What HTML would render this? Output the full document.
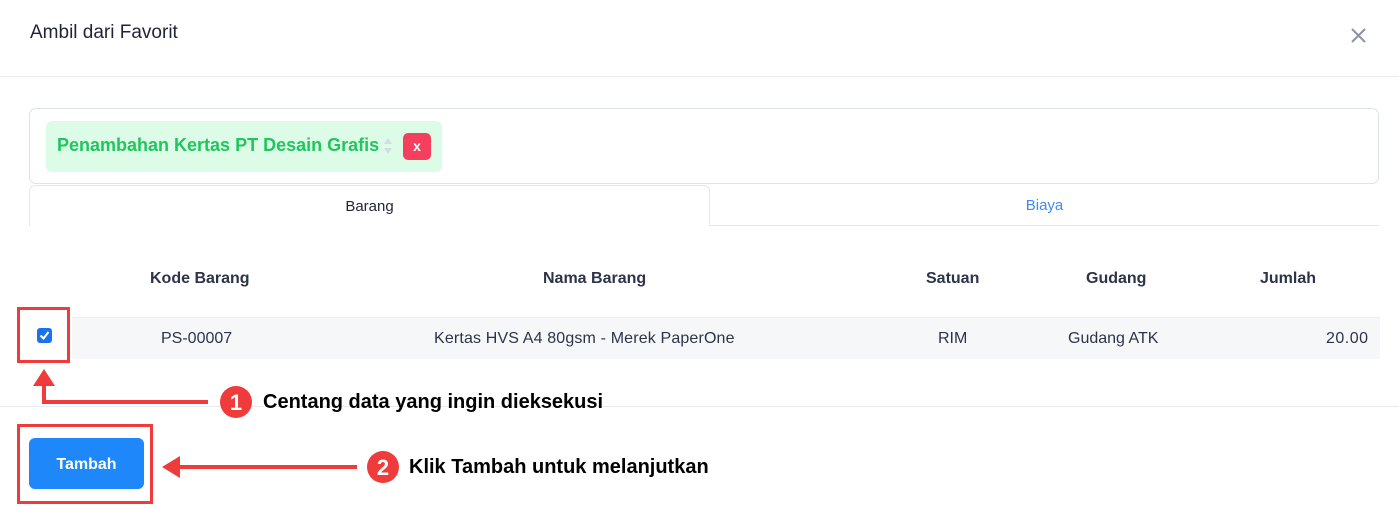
<!DOCTYPE html>
<html><head><style>
body{margin:0;width:1399px;height:514px;background:#fff;font-family:"Liberation Sans",sans-serif;position:relative;overflow:hidden}
.a{position:absolute}
</style></head><body>
<div class="a" style="left:30px;top:22px;font-size:19px;color:#1e2538">Ambil dari Favorit</div>
<svg class="a" style="left:1350px;top:27px" width="17" height="17"><path d="M2 2L15 15M15 2L2 15" stroke="#8a93a3" stroke-width="2"/></svg>
<div class="a" style="left:0;top:76px;width:1399px;height:1px;background:#e9ecf1"></div>
<div class="a" style="left:29px;top:108px;width:1350px;height:76px;border:1px solid #dde1ea;border-radius:7px;box-sizing:border-box"></div>
<div class="a" style="left:46px;top:121px;width:396px;height:51px;background:#dcfce7;border-radius:6px"></div>
<div class="a" style="left:57px;top:135px;font-size:18px;font-weight:bold;color:#22c55e">Penambahan Kertas PT Desain Grafis</div>
<div class="a" style="left:384px;top:138px;width:0;height:0;border:4px solid transparent;border-bottom:6px solid #d6dbe2;border-top:0"></div>
<div class="a" style="left:384px;top:148px;width:0;height:0;border:4px solid transparent;border-top:6px solid #d6dbe2;border-bottom:0"></div>
<div class="a" style="left:403px;top:133px;width:28px;height:27px;background:#f43f5e;border-radius:5px;color:#fff;font-size:14px;font-weight:bold;text-align:center;line-height:27px">x</div>
<div class="a" style="left:29px;top:185px;width:681px;height:41px;border:1px solid #e5e8ee;border-bottom:0;border-radius:6px 6px 0 0;box-sizing:border-box;text-align:center;line-height:42px;font-size:15px;color:#1e2538">Barang</div>
<div class="a" style="left:710px;top:225px;width:669px;height:1px;background:#e5e8ee"></div>
<div class="a" style="left:710px;top:186px;width:669px;text-align:center;line-height:40px;font-size:15px;color:#3b8cf5">Biaya</div>
<div class="a" style="top:270px;left:0;width:1399px;font-size:16px;font-weight:bold;color:#2d3448">
<span class="a" style="left:150px">Kode Barang</span><span class="a" style="left:543px">Nama Barang</span><span class="a" style="left:926px">Satuan</span><span class="a" style="left:1086px">Gudang</span><span class="a" style="left:1260px">Jumlah</span></div>
<div class="a" style="left:72px;top:317px;width:1308px;height:41px;background:#f6f7f9;border-top:1px solid #eceef2"></div>
<div class="a" style="top:330px;left:0;width:1399px;font-size:16px;color:#2d3448">
<span class="a" style="left:161px">PS-00007</span><span class="a" style="left:434px;letter-spacing:0.15px">Kertas HVS A4 80gsm - Merek PaperOne</span><span class="a" style="left:938px">RIM</span><span class="a" style="left:1068px">Gudang ATK</span><span class="a" style="left:1326px;letter-spacing:0.5px">20.00</span></div>
<div class="a" style="left:37px;top:328px;width:15px;height:15px;background:#1a73e8;border-radius:3px"></div>
<svg class="a" style="left:37px;top:328px" width="15" height="15"><path d="M3.5 7.5L6.5 10.5L11.5 4" stroke="#fff" stroke-width="2" fill="none"/></svg>
<div class="a" style="left:17px;top:307px;width:53px;height:56px;border:3px solid #ef3b3b;box-sizing:border-box"></div>
<div class="a" style="left:0;top:406px;width:1399px;height:1px;background:#e9ecf1"></div>
<svg class="a" style="left:0;top:360px" width="760" height="140">
<path d="M44 22V42H208" stroke="#ef3b3b" stroke-width="4" fill="none"/>
<path d="M33 26L44 9L55 26Z" fill="#ef3b3b"/>
<path d="M177 107H357" stroke="#ef3b3b" stroke-width="4"/>
<path d="M162 107L180 96L180 118Z" fill="#ef3b3b"/>
<circle cx="236" cy="42" r="16" fill="#ef3b3b"/>
<circle cx="383" cy="107" r="16" fill="#ef3b3b"/>
<text x="236" y="50" text-anchor="middle" fill="#fff" font-size="22" font-weight="bold" font-family="Liberation Sans">1</text>
<text x="383" y="115" text-anchor="middle" fill="#fff" font-size="22" font-weight="bold" font-family="Liberation Sans">2</text>
</svg>
<div class="a" style="left:263px;top:391px;font-size:20px;font-weight:bold;color:#000">Centang data yang ingin dieksekusi</div>
<div class="a" style="left:409px;top:456px;font-size:20px;font-weight:bold;color:#000">Klik Tambah untuk melanjutkan</div>
<div class="a" style="left:17px;top:424px;width:136px;height:80px;border:3px solid #ef3b3b;box-sizing:border-box"></div>
<div class="a" style="left:29px;top:438px;width:115px;height:51px;background:#1e88fb;border-radius:6px;color:#fff;font-size:16px;font-weight:bold;text-align:center;line-height:54px">Tambah</div>
</body></html>
